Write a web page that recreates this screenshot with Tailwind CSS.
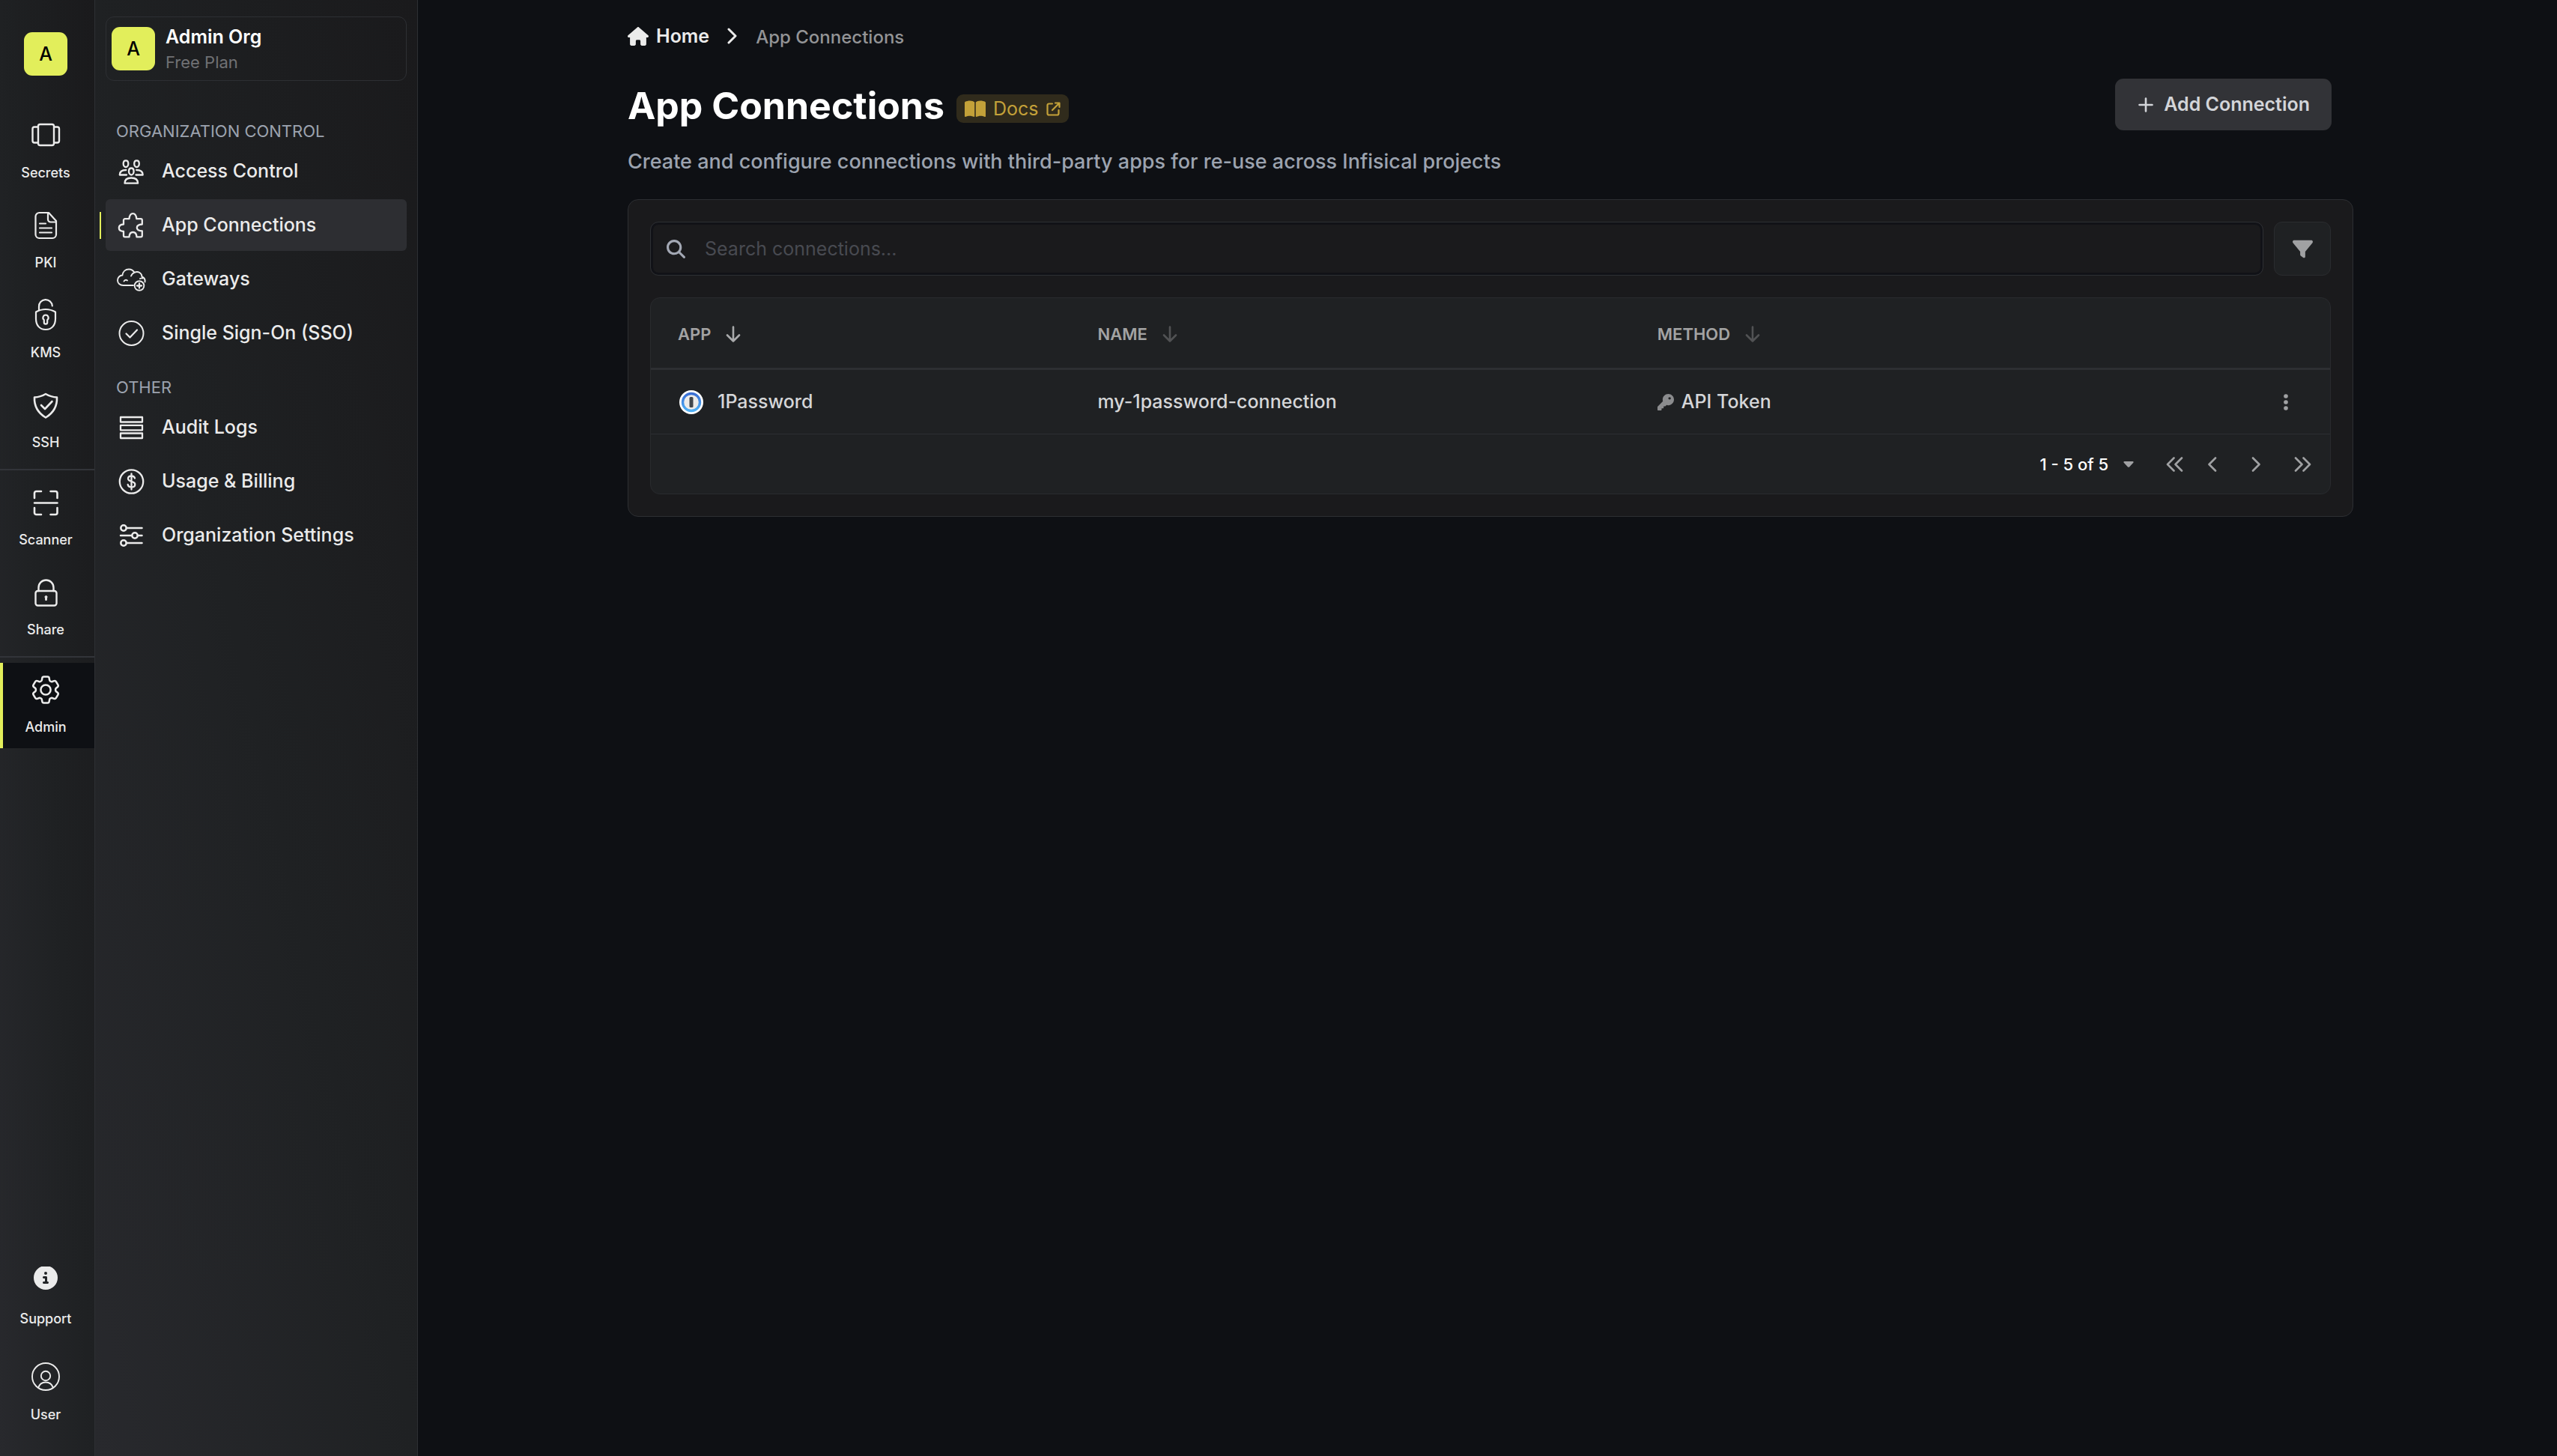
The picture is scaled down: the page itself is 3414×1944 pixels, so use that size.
<!DOCTYPE html>
<html lang="en">
<head>
<meta charset="utf-8">
<title>App Connections</title>
<script src="https://cdn.jsdelivr.net/npm/@tailwindcss/browser@4"></script>
</head>
<body class="flex min-h-screen bg-[#0e1014] font-['Inter',sans-serif] text-[25px] leading-[36px] text-[#ebebeb]">

<!-- Product rail -->
<nav aria-label="Products" class="flex w-[127px] shrink-0 flex-col border-r border-[#2d2f33] bg-linear-to-tr from-[#28292d] via-[#1f2123] to-[#1a1a1c] pt-[43px] pb-[27px] text-[18px] leading-[24px] font-medium">
  <div class="mb-[37px] flex justify-center pr-1">
    <a href="#" class="flex size-[58px] items-center justify-center rounded-[11px] bg-[#e2ee5b] text-[25px] text-black">A</a>
  </div>
  <div class="flex flex-col gap-[6px] py-[7px]">
    <a href="#" class="flex h-[114px] flex-col items-center pt-4 pr-1">
      <svg class="size-10" viewBox="0 0 40 40" fill="none" stroke="currentColor" stroke-width="2.4" stroke-linejoin="round"><rect x="10" y="5" width="21" height="28" rx="2.5"/><path d="M10 8.500H5A2.500 2.500 0 0 0 2.500 11v16A2.500 2.500 0 0 0 5 29.500h5M31 8.500h4.500A2.500 2.500 0 0 1 38 11v16a2.500 2.500 0 0 1-2.500 2.500H31"/></svg>
      <span class="mt-[18px]">Secrets</span>
    </a>
    <a href="#" class="flex h-[114px] flex-col items-center pt-4 pr-1">
      <svg class="size-10" viewBox="0 0 40 40" fill="none" stroke="currentColor" stroke-width="2.2" stroke-linejoin="round" stroke-linecap="round"><path d="M24 3H11.500A5 5 0 0 0 6.500 8v24a5 5 0 0 0 5 5h17.500a5 5 0 0 0 5-5V14zM23 3v9a3.500 3.500 0 0 0 3.500 3.500H34M12 17.500h8M12 23.500h16M12 29.500h16"/></svg>
      <span class="mt-[18px]">PKI</span>
    </a>
    <a href="#" class="flex h-[114px] flex-col items-center pt-4 pr-1">
      <svg class="size-10 overflow-visible" viewBox="0 0 40 40" fill="none" stroke="currentColor" stroke-width="2.2" stroke-linecap="round" stroke-linejoin="round"><path d="M11 13V8.500a8.800 8.800 0 0 1 17.800-1M20 12c5 0 9 1.200 13 3.500v9c0 9-5 14.500-13 14.500S7 33.500 7 24.500v-9C11 13.200 15 12 20 12z"/><path d="M20 19.500a3.700 3.700 0 0 1 2.200 6.600v3.400a2.200 2.200 0 0 1-4.400 0v-3.400A3.700 3.700 0 0 1 20 19.500z"/></svg>
      <span class="mt-[18px]">KMS</span>
    </a>
    <a href="#" class="flex h-[114px] flex-col items-center pt-4 pr-1">
      <svg class="size-10" viewBox="0 0 40 40" fill="none" stroke="currentColor" stroke-width="2.6" stroke-linecap="round" stroke-linejoin="round"><path d="M20 5c5 3 9.500 4.300 15 4.500C35.500 22 30 30.500 20 36.500 10 30.500 4.500 22 5 9.500 10.500 9.300 15 8 20 5zM14 20l5 5 9.500-10"/></svg>
      <span class="mt-[18px]">SSH</span>
    </a>
  </div>
  <div class="h-[2px] bg-[#323439]"></div>
  <div class="flex flex-col gap-[6px] py-[7px]">
    <a href="#" class="flex h-[114px] flex-col items-center pt-4 pr-1">
      <svg class="size-10" viewBox="0 0 40 40" fill="none" stroke="currentColor" stroke-width="2.6" stroke-linecap="round" stroke-linejoin="round"><path d="M5 14V7.500A2.500 2.500 0 0 1 7.500 5H14M26.500 5H33a2.500 2.500 0 0 1 2.500 2.500V14M35.500 27v6.500A2.500 2.500 0 0 1 33 36h-6.500M14 36H7.500A2.500 2.500 0 0 1 5 33.500V27M5 20.500h30.500"/></svg>
      <span class="mt-[18px]">Scanner</span>
    </a>
    <a href="#" class="flex h-[114px] flex-col items-center pt-4 pr-1">
      <svg class="size-10" viewBox="0 0 40 40" fill="none" stroke="currentColor" stroke-width="2.400" stroke-linecap="round" stroke-linejoin="round"><rect x="6.500" y="18" width="28" height="19.500" rx="3"/><path d="M10.500 18v-4.500a10 10 0 0 1 20 0V18"/><path d="M20.500 24.500a1.500 1.500 0 0 1 1 2.600l-.3 3.400h-1.400l-.3-3.400a1.500 1.500 0 0 1 1-2.600z" fill="currentColor" stroke-width="1"/></svg>
      <span class="mt-[18px]">Share</span>
    </a>
  </div>
  <div class="h-[2px] bg-[#323439]"></div>
  <div class="pt-[7px]">
    <a href="#" aria-current="page" class="relative flex h-[114px] flex-col items-center bg-[#0e1014] pt-4 pr-1">
      <span class="absolute inset-y-0 left-0 w-1 bg-[#e2ee5b]"></span>
      <svg class="size-10" viewBox="1.700 1.700 20.600 20.600" fill="none" stroke="currentColor" stroke-width="1.300" stroke-linejoin="round"><path d="M9.594 3.940c.09-.542.56-.94 1.110-.94h2.593c.55 0 1.020.398 1.110.94l.213 1.281c.063.374.313.686.645.87.074.04.147.083.22.127.325.196.72.257 1.075.124l1.217-.456a1.125 1.125 0 0 1 1.370.49l1.296 2.247a1.125 1.125 0 0 1-.26 1.431l-1.003.827c-.293.241-.438.613-.43.992a7.723 7.723 0 0 1 0 .255c-.008.378.137.75.43.991l1.004.827c.424.35.534.955.26 1.430l-1.298 2.247a1.125 1.125 0 0 1-1.369.491l-1.217-.456c-.355-.133-.75-.072-1.076.124a6.470 6.470 0 0 1-.22.128c-.331.183-.581.495-.644.869l-.213 1.281c-.09.543-.56.94-1.110.94h-2.594c-.55 0-1.019-.398-1.110-.94l-.213-1.281c-.062-.374-.312-.686-.644-.87a6.520 6.520 0 0 1-.22-.127c-.325-.196-.72-.257-1.076-.124l-1.217.456a1.125 1.125 0 0 1-1.369-.49l-1.297-2.247a1.125 1.125 0 0 1 .26-1.431l1.004-.827c.292-.24.437-.613.43-.991a6.932 6.932 0 0 1 0-.255c.007-.38-.138-.751-.43-.992l-1.004-.827a1.125 1.125 0 0 1-.26-1.430l1.297-2.247a1.125 1.125 0 0 1 1.370-.491l1.216.456c.356.133.751.072 1.076-.124.072-.044.146-.086.22-.128.332-.183.582-.495.644-.869z"/><circle cx="12" cy="12" r="3.400"/></svg>
      <span class="mt-[18px]">Admin</span>
    </a>
  </div>
  <div class="mt-auto flex flex-col gap-[14px]">
    <a href="#" class="flex h-[114px] flex-col items-center pt-4 pr-1">
      <svg class="size-10" viewBox="-64 16 640 640" fill="currentColor"><path d="M256 512A256 256 0 1 0 256 0a256 256 0 1 0 0 512zM216 336h24V272H216c-13.300 0-24-10.700-24-24s10.700-24 24-24h48c13.300 0 24 10.700 24 24v88h8c13.300 0 24 10.700 24 24s-10.700 24-24 24H216c-13.300 0-24-10.700-24-24s10.700-24 24-24zm40-208a32 32 0 1 1 0 64 32 32 0 1 1 0-64z"/></svg>
      <span class="mt-[18px]">Support</span>
    </a>
    <a href="#" class="flex h-[114px] flex-col items-center pt-4 pr-1">
      <svg class="size-10" viewBox="0 0 40 40" fill="none" stroke="currentColor" stroke-width="1.900"><circle cx="20" cy="19" r="18"/><circle cx="20" cy="18" r="6.200"/><path d="M10 34c1.500-4.500 5.500-7.500 10-7.500s8.500 3 10 7.500"/></svg>
      <span class="mt-[18px]">User</span>
    </a>
  </div>
</nav>

<!-- Organization sidebar -->
<aside class="w-[431px] shrink-0 border-r border-[#2d2f33] bg-linear-to-tr from-[#28292d] via-[#1f2123] to-[#1a1a1c] px-[14px] pt-[22px]">
  <button type="button" class="mb-[29px] flex h-[86px] w-full items-center gap-[14px] rounded-[11px] border border-[#2d2f33] pl-[7px] text-left">
    <span class="flex size-[58px] items-center justify-center rounded-[11px] bg-[#e2ee5b] font-medium text-black">A</span>
    <span class="flex flex-col pt-[2px] leading-[34px]">
      <span class="font-semibold text-white">Admin Org</span>
      <span class="text-[22px] text-[#707174]">Free Plan</span>
    </span>
  </button>

  <h2 class="flex h-[57px] items-end pb-[6px] pl-[14px] text-[22px] leading-[26px] text-[#9ca3af]">ORGANIZATION CONTROL</h2>
  <ul class="flex flex-col gap-[3px] font-medium">
    <li><a href="#" class="flex h-[69px] items-center gap-5 rounded-[6px] pl-[15px]">
      <svg class="size-10" viewBox="0 0 40 40" fill="none" stroke="currentColor" stroke-width="2.300" stroke-linejoin="round" stroke-linecap="round"><path d="M12 5.300c2.200 0 3.300 1.800 3.300 4.200S14 14 12 14s-3.300-2.100-3.300-4.500S9.800 5.300 12 5.300zM26.500 5.300c2.200 0 3.300 1.800 3.300 4.200S28.500 14 26.500 14s-3.300-2.100-3.300-4.500 1.100-4.200 3.300-4.200zM19.300 15.500c2.200 0 3.300 1.800 3.300 4.200s-1.300 4.800-3.300 4.800-3.300-2.400-3.300-4.800 1.100-4.200 3.300-4.200z"/><path d="M13 24.500H3.800c0-4 3-6.500 8.500-6.500M25.500 24.500h9.200c0-4-3-6.500-8.500-6.500"/><path d="M10.500 35.700c0-5 3-7.200 8.800-7.200s8.800 2.200 8.800 7.200z"/></svg>
      <span class="pb-[2px]">Access Control</span></a></li>
    <li class="relative"><span class="absolute top-[17px] -left-2 h-9 w-[2px] bg-[#e2ee5b]"></span><a href="#" aria-current="page" class="flex h-[69px] items-center gap-5 rounded-[6px] bg-[#2d2e32] pl-[15px]">
      <svg class="size-10" viewBox="0 0 40 40" fill="none" stroke="currentColor" stroke-width="2.300" stroke-linejoin="round"><path d="M9 13a1.800 1.800 0 0 1 1.800-1.800h5.700c.5-5 1.800-7 4.900-7s4.400 2 4.900 7H32a1.800 1.800 0 0 1 1.800 1.800v5.500c-4.800.3-7 1.900-7 4.500s2.200 4.200 7 4.500v6a1.800 1.800 0 0 1-1.800 1.800h-5.500c-.3-4.200-2-6.300-5-6.300s-4.700 2.100-5 6.300h-5.700A1.800 1.800 0 0 1 9 33.500V28c-4.200-.3-6.200-2-6.200-4.700s2-4.500 6.200-4.800z"/></svg>
      <span class="pb-[2px]">App Connections</span></a></li>
    <li><a href="#" class="flex h-[69px] items-center gap-5 rounded-[6px] pl-[15px]">
      <svg class="size-10" viewBox="0 0 40 40" fill="none" stroke="currentColor" stroke-width="1.900" stroke-linecap="round" stroke-linejoin="round"><path d="M22 28H8.500C4 28 1 25 1 21.200S4 14.600 7.500 14.500C8 9.500 11.500 6.500 16 6.500c3.500 0 6 1.700 7.500 4.300 5-2.300 10 .8 10 5.700 3 1 4.500 3.500 4 7M19 15.500c1-2.700 2.500-4 4.500-4.700M9.500 22.500c1.500-2 3-2 4.500-1M31 19c1-.5 2-.8 3.500-.5"/><circle cx="30" cy="28.500" r="6.300"/><path d="M27 28.500h6M30 25.500v6" stroke-width="2.300"/></svg>
      <span class="pb-[2px]">Gateways</span></a></li>
    <li><a href="#" class="flex h-[69px] items-center gap-5 rounded-[6px] pl-[15px]">
      <svg class="size-10" viewBox="0 0 40 40" fill="none" stroke="currentColor" stroke-width="2" stroke-linecap="round" stroke-linejoin="round"><circle cx="19.500" cy="20" r="16"/><path d="M12.500 20.500l5 5 9.500-10" stroke-width="2.200"/></svg>
      <span class="pb-[2px]">Single Sign-On (SSO)</span></a></li>
  </ul>

  <h2 class="flex h-[57px] items-end pb-[6px] pl-[14px] text-[22px] leading-[26px] text-[#9ca3af]">OTHER</h2>
  <ul class="flex flex-col gap-[3px] font-medium">
    <li><a href="#" class="flex h-[69px] items-center gap-5 rounded-[6px] pl-[15px]">
      <svg class="size-10" viewBox="0 0 40 40" fill="none" stroke="currentColor" stroke-width="2.300" stroke-linejoin="round"><path d="M5 6h29v6.500H5zM5 16.800h29v6.500H5zM5 27.500h29V34H5z"/></svg>
      <span class="pb-[2px]">Audit Logs</span></a></li>
    <li><a href="#" class="flex h-[69px] items-center gap-5 rounded-[6px] pl-[15px]">
      <svg class="size-10" viewBox="0 0 40 40" fill="none" stroke="currentColor" stroke-width="2.300" stroke-linecap="round" stroke-linejoin="round"><circle cx="19.500" cy="20" r="15.700"/><path d="M24 15.500c-.5-2-2.200-3-4.500-3-2.700 0-4.500 1.300-4.500 3.600 0 5 9.300 2.500 9.300 7.600 0 2.300-2 3.700-4.800 3.700-2.500 0-4.400-1.200-4.800-3.400M19.500 9.500v21"/></svg>
      <span class="pb-[2px]">Usage &amp; Billing</span></a></li>
    <li><a href="#" class="flex h-[69px] items-center gap-5 rounded-[6px] pl-[15px]">
      <svg class="size-10" viewBox="0 0 40 40" fill="none" stroke="currentColor" stroke-width="2.500" stroke-linecap="round"><circle cx="9" cy="10" r="3.700"/><path d="M13 10h20.500M5 20h14.500M28 20h5.500M13 30h20.500"/><circle cx="24" cy="20" r="3.700"/><circle cx="9" cy="30" r="3.700"/></svg>
      <span class="pb-[2px]">Organization Settings</span></a></li>
  </ul>
</aside>

<!-- Content -->
<main class="min-w-0 flex-1 pt-[30px] pl-2">
  <div class="mx-auto max-w-[2304px]">
    <nav aria-label="Breadcrumb" class="flex h-9 items-center">
      <a href="#" class="flex items-center gap-[10px] font-semibold">
        <svg class="h-[25px] w-[28px]" viewBox="0 0 576 512" fill="currentColor"><path d="M575.800 255.500c0 18-15 32.100-32 32.100h-32l.7 160.200c0 2.700-.2 5.400-.5 8.100V472c0 22.100-17.900 40-40 40H392c-22.100 0-40-17.900-40-40v-88c0-17.700-14.300-32-32-32h-64c-17.700 0-32 14.300-32 32v88c0 22.100-17.900 40-40 40h-80c-22.100 0-40-17.900-40-40V287.600H32c-18 0-32-14-32-32.100 0-9 3-17 10-24L266.400 8c7-7 15-8 22-8s15 2 21 7l255.400 224.500c8 7 12 15 11 24z"/></svg>
        <span>Home</span></a>
      <svg class="mx-[24px] h-[22px] w-[14px]" viewBox="0 0 14 22" fill="none" stroke="currentColor" stroke-width="3" stroke-linecap="round" stroke-linejoin="round"><path d="M2 2l9 9-9 9"/></svg>
      <span class="pt-[3px] text-[24px] font-medium text-[#939496]">App Connections</span>
    </nav>

    <header class="mt-[39px] flex items-start justify-between pr-[29px]">
      <div class="pt-[6px]">
        <div class="flex items-center gap-4">
          <h1 class="text-[50px] leading-[60px] font-bold text-white">App Connections</h1>
          <a href="#" class="mt-2 flex h-[38px] items-center gap-[10px] rounded-[9px] bg-[#302b1c] px-[11px] text-[#c3a139]">
            <svg class="h-[25px] w-[28px]" viewBox="0 0 576 512" fill="currentColor"><path d="M249.600 471.500c10.800 3.800 22.400-4.100 22.400-15.500V78.600c0-4.200-1.600-8.400-5-11C247.400 52 202.400 32 144 32 93.500 32 46.300 45.300 18.100 56.100 6.800 60.500 0 71.700 0 83.800v370.300c0 11.900 12.800 20.200 24.100 16.500C55.600 460.100 105.500 448 144 448c33.900 0 79 14 105.600 23.500zm76.800 0C353 462 398.100 448 432 448c38.500 0 88.400 12.100 119.900 22.600 11.300 3.800 24.100-4.600 24.100-16.500V83.800c0-12.100-6.800-23.300-18.100-27.600C529.700 45.300 482.500 32 432 32c-58.400 0-103.400 20-123 35.600-3.300 2.600-5 6.800-5 11V456c0 11.400 11.700 19.300 22.400 15.500z"/></svg>
            <span>Docs</span>
            <svg class="size-[19px]" viewBox="0 0 19 19" fill="none" stroke="currentColor" stroke-width="2.200" stroke-linecap="round" stroke-linejoin="round"><path d="M8 2.500H3.500a2 2 0 0 0-2 2v11a2 2 0 0 0 2 2h11a2 2 0 0 0 2-2V11M12 1.500h5.500V7M17 2L8 11"/></svg>
          </a>
        </div>
        <p class="mt-[25px] text-[27px] leading-[40px] font-medium text-[#9ca3af]">Create and configure connections with third-party apps for re-use across Infisical projects</p>
      </div>
      <button type="button" class="flex h-[69px] items-center gap-[14px] rounded-[11px] bg-[#323337] pr-[29px] pl-[31px] font-semibold text-[#d3d5d9]">
        <svg class="size-5" viewBox="0 0 20 20" fill="none" stroke="currentColor" stroke-width="2.600" stroke-linecap="round"><path d="M10 1.500v17M1.500 10h17"/></svg>
        <span class="pb-[2px]">Add Connection</span></button>
    </header>

    <section class="mt-[30px] rounded-[14px] border border-[#2d2f33] bg-[#1a1a1c] p-[29px]">
      <div class="flex gap-[14px]">
        <label class="flex h-[72px] flex-1 items-center gap-[26px] rounded-[11px] border border-[#2d2f33] pr-5 pl-[21px] shadow-[inset_0_0_0_3px_#111217]">
          <svg class="size-[25px] shrink-0 text-[#a3a8b4]" viewBox="0 0 512 512" fill="currentColor"><path d="M416 208c0 45.900-14.900 88.300-40 122.700l126.600 126.700c12.500 12.500 12.500 32.800 0 45.300s-32.800 12.500-45.300 0L330.700 376c-34.400 25.200-76.800 40-122.700 40C93.100 416 0 322.900 0 208S93.100 0 208 0s208 93.100 208 208zM208 352a144 144 0 1 0 0-288 144 144 0 1 0 0 288z"/></svg>
          <input type="text" aria-label="Search connections" placeholder="Search connections..." class="min-w-0 flex-1 bg-transparent outline-none placeholder:text-[#484a51]">
        </label>
        <button type="button" aria-label="Filter" class="flex h-[72px] w-[76px] items-center justify-center rounded-[11px] border border-[#2a2c2f] bg-[#1f2123] text-[#a0a1a3]">
          <svg class="size-[27px]" viewBox="0 0 512 512" fill="currentColor"><path d="M3.900 54.900C10.500 40.900 24.500 32 40 32h432c15.500 0 29.500 8.900 36.100 22.900s4.600 30.500-5.200 42.500L320 320.900V448c0 12.100-6.800 23.200-17.700 28.600s-23.800 4.300-33.500-3l-64-48c-8.100-6-12.800-15.500-12.800-25.600v-79.100L9 97.300C-.7 85.400-2.800 68.800 3.900 54.900z"/></svg>
        </button>
      </div>

      <div class="mt-[29px] overflow-hidden rounded-[13px] border border-[#292b2e] bg-[#1f2123]">
        <table class="w-full table-fixed border-separate border-spacing-0 text-left">
          <thead class="text-[22px] text-[#a3a3a3]">
            <tr>
              <th scope="col" class="h-[96px] w-1/4 border-b-3 border-[#2d2f32] pt-[2px] pl-[36px] font-semibold">
                <span class="flex items-center gap-5">APP
                  <button type="button" aria-label="Sort by app" class="text-[#a9aaac]"><svg class="h-[22px] w-5" viewBox="0 0 20 22" fill="none" stroke="currentColor" stroke-width="2.600" stroke-linecap="round" stroke-linejoin="round"><path d="M10 1.500v19M2 12.500l8 8 8-8"/></svg></button></span></th>
              <th scope="col" class="w-1/3 border-b-3 border-[#2d2f32] pt-[2px] pl-[36px] font-semibold">
                <span class="flex items-center gap-5">NAME
                  <button type="button" aria-label="Sort by name" class="text-[#515254]"><svg class="h-[22px] w-5" viewBox="0 0 20 22" fill="none" stroke="currentColor" stroke-width="2.600" stroke-linecap="round" stroke-linejoin="round"><path d="M10 1.500v19M2 12.500l8 8 8-8"/></svg></button></span></th>
              <th scope="col" class="border-b-3 border-[#2d2f32] pt-[2px] pl-[36px] font-semibold">
                <span class="flex items-center gap-5">METHOD
                  <button type="button" aria-label="Sort by method" class="text-[#515254]"><svg class="h-[22px] w-5" viewBox="0 0 20 22" fill="none" stroke="currentColor" stroke-width="2.600" stroke-linecap="round" stroke-linejoin="round"><path d="M10 1.500v19M2 12.500l8 8 8-8"/></svg></button></span></th>
              <th scope="col" class="w-[118px] border-b-3 border-[#2d2f32]"></th>
            </tr>
          </thead>
          <tbody class="font-medium text-[#d5d6d8]">
            <tr>
              <td class="h-[86px] border-b border-[#2d2f32] pl-[37px]">
                <span class="flex items-center gap-[18px]">
                  <svg class="size-[34px]" viewBox="0 0 34 34"><defs><linearGradient id="ring" x1="0" y1="0" x2="0" y2="1"><stop offset="0" stop-color="#3b6fd4"/><stop offset="1" stop-color="#4fb0f5"/></linearGradient></defs><circle cx="17" cy="17" r="16" fill="#fff"/><circle cx="17" cy="17" r="11.500" fill="#ecebe9" stroke="url(#ring)" stroke-width="3.400"/><rect x="14.500" y="10" width="5" height="14" rx="1.500" fill="#40464c"/></svg>
                  <span class="pb-[2px]">1Password</span></span></td>
              <td class="border-b border-[#2d2f32] pb-[2px] pl-[36px]">my-1password-connection</td>
              <td class="border-b border-[#2d2f32] pl-[36px]">
                <span class="flex items-center gap-[10px]">
                  <svg class="size-[22px] text-[#8b8c8e]" viewBox="0 0 512 512" fill="currentColor"><path d="M336 352c97.200 0 176-78.800 176-176S433.200 0 336 0 160 78.800 160 176c0 18.700 2.900 36.800 8.300 53.700L7 391c-4.500 4.500-7 10.600-7 17v80c0 13.300 10.700 24 24 24h80c13.300 0 24-10.700 24-24v-40h40c13.300 0 24-10.700 24-24v-40h40c6.400 0 12.500-2.500 17-7l33.300-33.300c16.900 5.400 35 8.300 53.700 8.300zM376 96a40 40 0 1 1 0 80 40 40 0 1 1 0-80z"/></svg>
                  <span class="pb-[2px]">API Token</span></span></td>
              <td class="border-b border-[#2d2f32]">
                <button type="button" aria-label="Connection options" class="mx-auto flex text-[#a0a1a3]"><svg class="size-[22px]" viewBox="0 0 22 22" fill="currentColor"><circle cx="11" cy="3" r="2.800"/><circle cx="11" cy="11" r="2.800"/><circle cx="11" cy="19" r="2.800"/></svg></button></td>
            </tr>
          </tbody>
        </table>
        <div class="flex h-[79px] items-center justify-end pr-[25px] text-[#a0a1a3]">
          <span class="text-[22px] font-medium text-white">1 - 5 of 5</span>
          <button type="button" aria-label="Rows per page" class="mr-[43px] ml-[20px]"><svg class="h-2 w-[14px]" viewBox="0 0 14 8" fill="currentColor"><path d="M1.500 0h11c1 0 1.500 1 .8 1.700L8 7.400c-.6.600-1.400.6-2 0L.7 1.700C0 1 .5 0 1.500 0z"/></svg></button>
          <div class="mr-[46px] flex gap-[32px]">
            <button type="button" aria-label="First page"><svg class="h-5 w-[23px]" viewBox="0 0 23 20" fill="none" stroke="currentColor" stroke-width="2.600" stroke-linecap="round" stroke-linejoin="round"><path d="M10.500 1.500L2 10l8.500 8.500M21 1.500L12.500 10l8.500 8.500"/></svg></button>
            <button type="button" aria-label="Previous page"><svg class="h-5 w-[13px]" viewBox="0 0 13 20" fill="none" stroke="currentColor" stroke-width="2.600" stroke-linecap="round" stroke-linejoin="round"><path d="M11 1.500L2.500 10l8.500 8.500"/></svg></button>
          </div>
          <div class="flex gap-[44px]">
            <button type="button" aria-label="Next page"><svg class="h-5 w-[13px]" viewBox="0 0 13 20" fill="none" stroke="currentColor" stroke-width="2.600" stroke-linecap="round" stroke-linejoin="round"><path d="M2 1.500l8.500 8.500L2 18.500"/></svg></button>
            <button type="button" aria-label="Last page"><svg class="h-5 w-[23px]" viewBox="0 0 23 20" fill="none" stroke="currentColor" stroke-width="2.600" stroke-linecap="round" stroke-linejoin="round"><path d="M2 1.500l8.500 8.500L2 18.500M12.500 1.500L21 10l-8.500 8.500"/></svg></button>
          </div>
        </div>
      </div>
    </section>
  </div>
</main>
</body>
</html>
